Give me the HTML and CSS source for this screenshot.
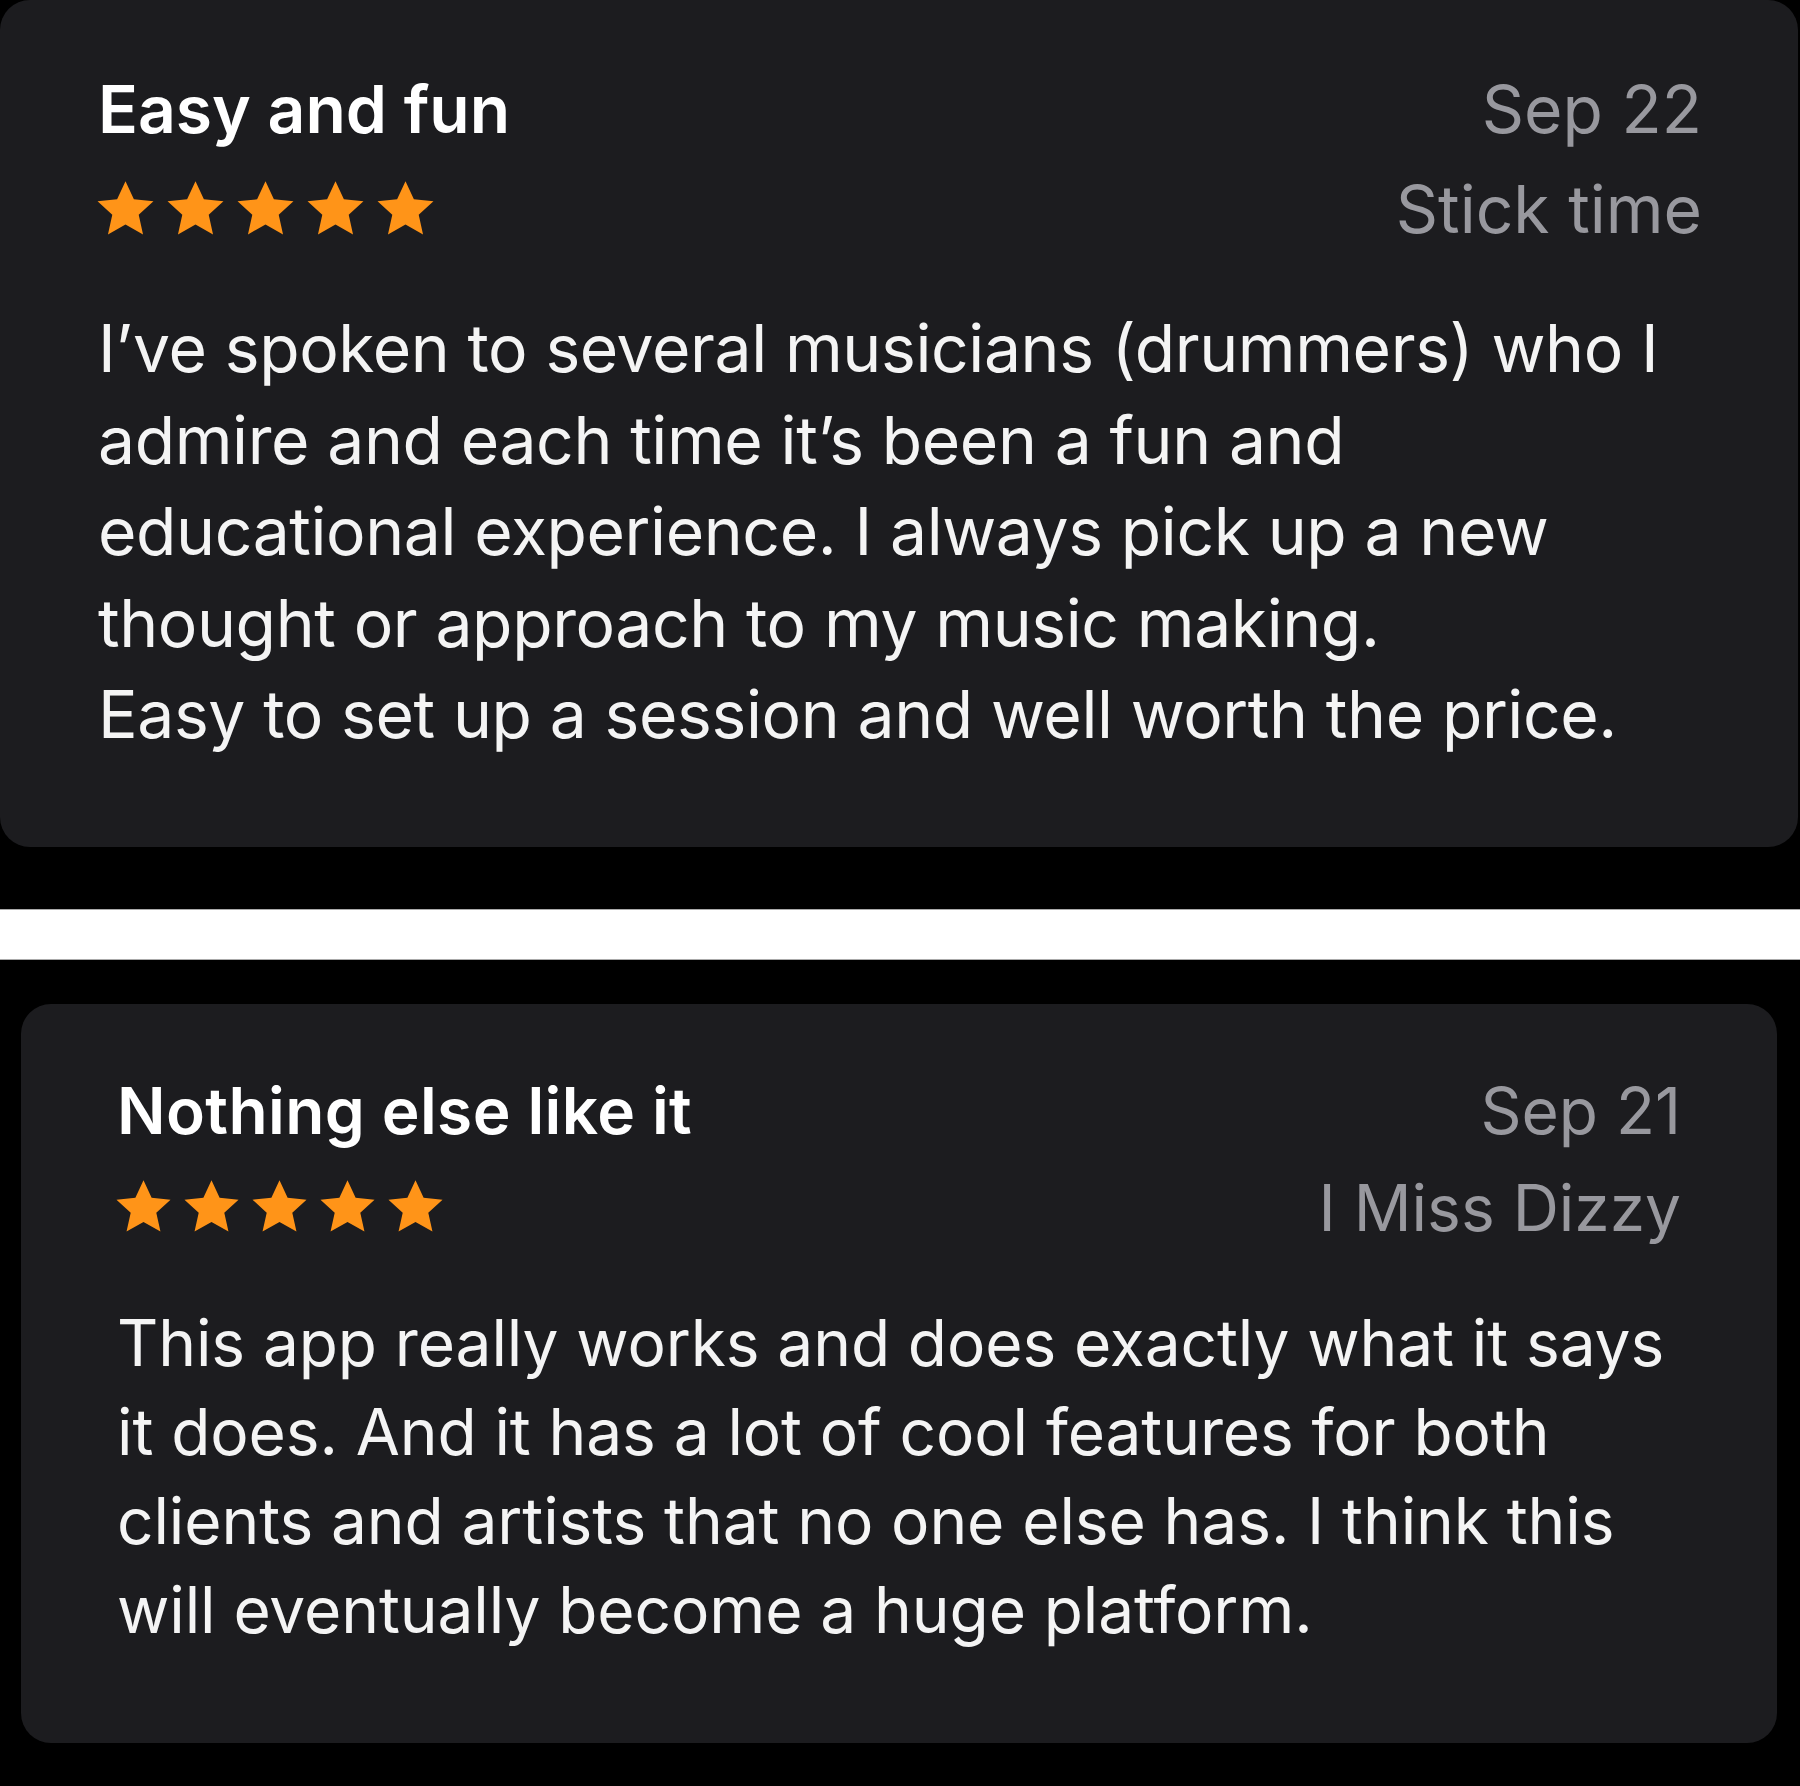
FILE: index.html
```html
<!DOCTYPE html>
<html lang="en">
<head>
    <meta charset="UTF-8">
    <meta name="viewport" content="width=device-width, initial-scale=1.0">
    <title>Reviews</title>
    <link rel="stylesheet" href="styles.css">
</head>
<body>

    <section class="review review-first">
        <div class="review-head">
            <h2 class="review-title">Easy and fun</h2>
            <span class="review-date">Sep 22</span>
            <div class="stars">
                <svg viewBox="0 0 24 24"><path d="M12 .9l3.3 7.1 7.7.8-5.8 5.3 1.7 7.7L12 17.9l-6.9 3.9 1.7-7.7L1 8.8l7.7-.8z"/></svg>
                <svg viewBox="0 0 24 24"><path d="M12 .9l3.3 7.1 7.7.8-5.8 5.3 1.7 7.7L12 17.9l-6.9 3.9 1.7-7.7L1 8.8l7.7-.8z"/></svg>
                <svg viewBox="0 0 24 24"><path d="M12 .9l3.3 7.1 7.7.8-5.8 5.3 1.7 7.7L12 17.9l-6.9 3.9 1.7-7.7L1 8.8l7.7-.8z"/></svg>
                <svg viewBox="0 0 24 24"><path d="M12 .9l3.3 7.1 7.7.8-5.8 5.3 1.7 7.7L12 17.9l-6.9 3.9 1.7-7.7L1 8.8l7.7-.8z"/></svg>
                <svg viewBox="0 0 24 24"><path d="M12 .9l3.3 7.1 7.7.8-5.8 5.3 1.7 7.7L12 17.9l-6.9 3.9 1.7-7.7L1 8.8l7.7-.8z"/></svg>
            </div>
            <span class="review-author">Stick time</span>
        </div>
        <p class="review-body">
            I’ve spoken to several musicians (drummers) who I<br>
            admire and each time it’s been a fun and<br>
            educational experience. I always pick up a new<br>
            thought or approach to my music making.<br>
            Easy to set up a session and well worth the price.
        </p>
    </section>

    <div class="divider"></div>

    <section class="review review-second">
        <div class="review-head">
            <h2 class="review-title">Nothing else like it</h2>
            <span class="review-date">Sep 21</span>
            <div class="stars">
                <svg viewBox="0 0 24 24"><path d="M12 .9l3.3 7.1 7.7.8-5.8 5.3 1.7 7.7L12 17.9l-6.9 3.9 1.7-7.7L1 8.8l7.7-.8z"/></svg>
                <svg viewBox="0 0 24 24"><path d="M12 .9l3.3 7.1 7.7.8-5.8 5.3 1.7 7.7L12 17.9l-6.9 3.9 1.7-7.7L1 8.8l7.7-.8z"/></svg>
                <svg viewBox="0 0 24 24"><path d="M12 .9l3.3 7.1 7.7.8-5.8 5.3 1.7 7.7L12 17.9l-6.9 3.9 1.7-7.7L1 8.8l7.7-.8z"/></svg>
                <svg viewBox="0 0 24 24"><path d="M12 .9l3.3 7.1 7.7.8-5.8 5.3 1.7 7.7L12 17.9l-6.9 3.9 1.7-7.7L1 8.8l7.7-.8z"/></svg>
                <svg viewBox="0 0 24 24"><path d="M12 .9l3.3 7.1 7.7.8-5.8 5.3 1.7 7.7L12 17.9l-6.9 3.9 1.7-7.7L1 8.8l7.7-.8z"/></svg>
            </div>
            <span class="review-author">I Miss Dizzy</span>
        </div>
        <p class="review-body">
            This app really works and does exactly what it says<br>
            it does. And it has a lot of cool features for both<br>
            clients and artists that no one else has. I think this<br>
            will eventually become a huge platform.
        </p>
    </section>

</body>
</html>
```

FILE: styles.css
```css
html, body {
    margin: 0;
    padding: 0;
    background-color: #000;
}
body {
    font-family: Inter, "Noto Sans", sans-serif;
    color: #fff;
    height: 1786px;
    overflow: hidden;
}
.review {
    background-color: #1c1c1f;
    border-radius: 30px;
    box-sizing: border-box;
}
.review-first {
    margin: 0 2px 0 0;
    height: 847px;
    padding: 59px 96px 0 98px;
}
.review-second {
    margin: 44px 23px 0 21px;
    height: 739px;
    padding: 58px 96px 0 96px;
}
.review-head {
    display: grid;
    grid-template-columns: 1fr auto;
    grid-template-rows: 100px 100px;
    align-items: center;
}
.review-title {
    margin: 0;
    font-size: 66px;
    font-weight: 600;
    line-height: 100px;
}
.review-date, .review-author {
    font-size: 66px;
    line-height: 100px;
    color: #98989e;
    text-align: right;
}
.stars {
    display: flex;
    gap: 9px;
    margin-left: -3px;
}
.stars svg {
    width: 61px;
    height: 61px;
    fill: #ff9418;
}
.review-body {
    margin: 44px 0 0;
    font-size: 66px;
    line-height: 91.5px;
    letter-spacing: -0.4px;
    color: #f4f4f4;
}
.review-second .review-head {
    grid-template-rows: 97px 97px;
}
.review-second .review-title,
.review-second .review-date,
.review-second .review-author {
    font-size: 64px;
    line-height: 97px;
}
.review-second .review-title {
    letter-spacing: 0.4px;
}
.review-second .stars svg {
    width: 59px;
    height: 59px;
}
.review-second .review-body {
    font-size: 64px;
    line-height: 89px;
    letter-spacing: -0.1px;
    margin-top: 42px;
}
.divider {
    margin-top: 62px;
    height: 49px;
    background-color: #fff;
    border-top: 1px solid #aaa;
    border-bottom: 1px solid #aaa;
}
```
